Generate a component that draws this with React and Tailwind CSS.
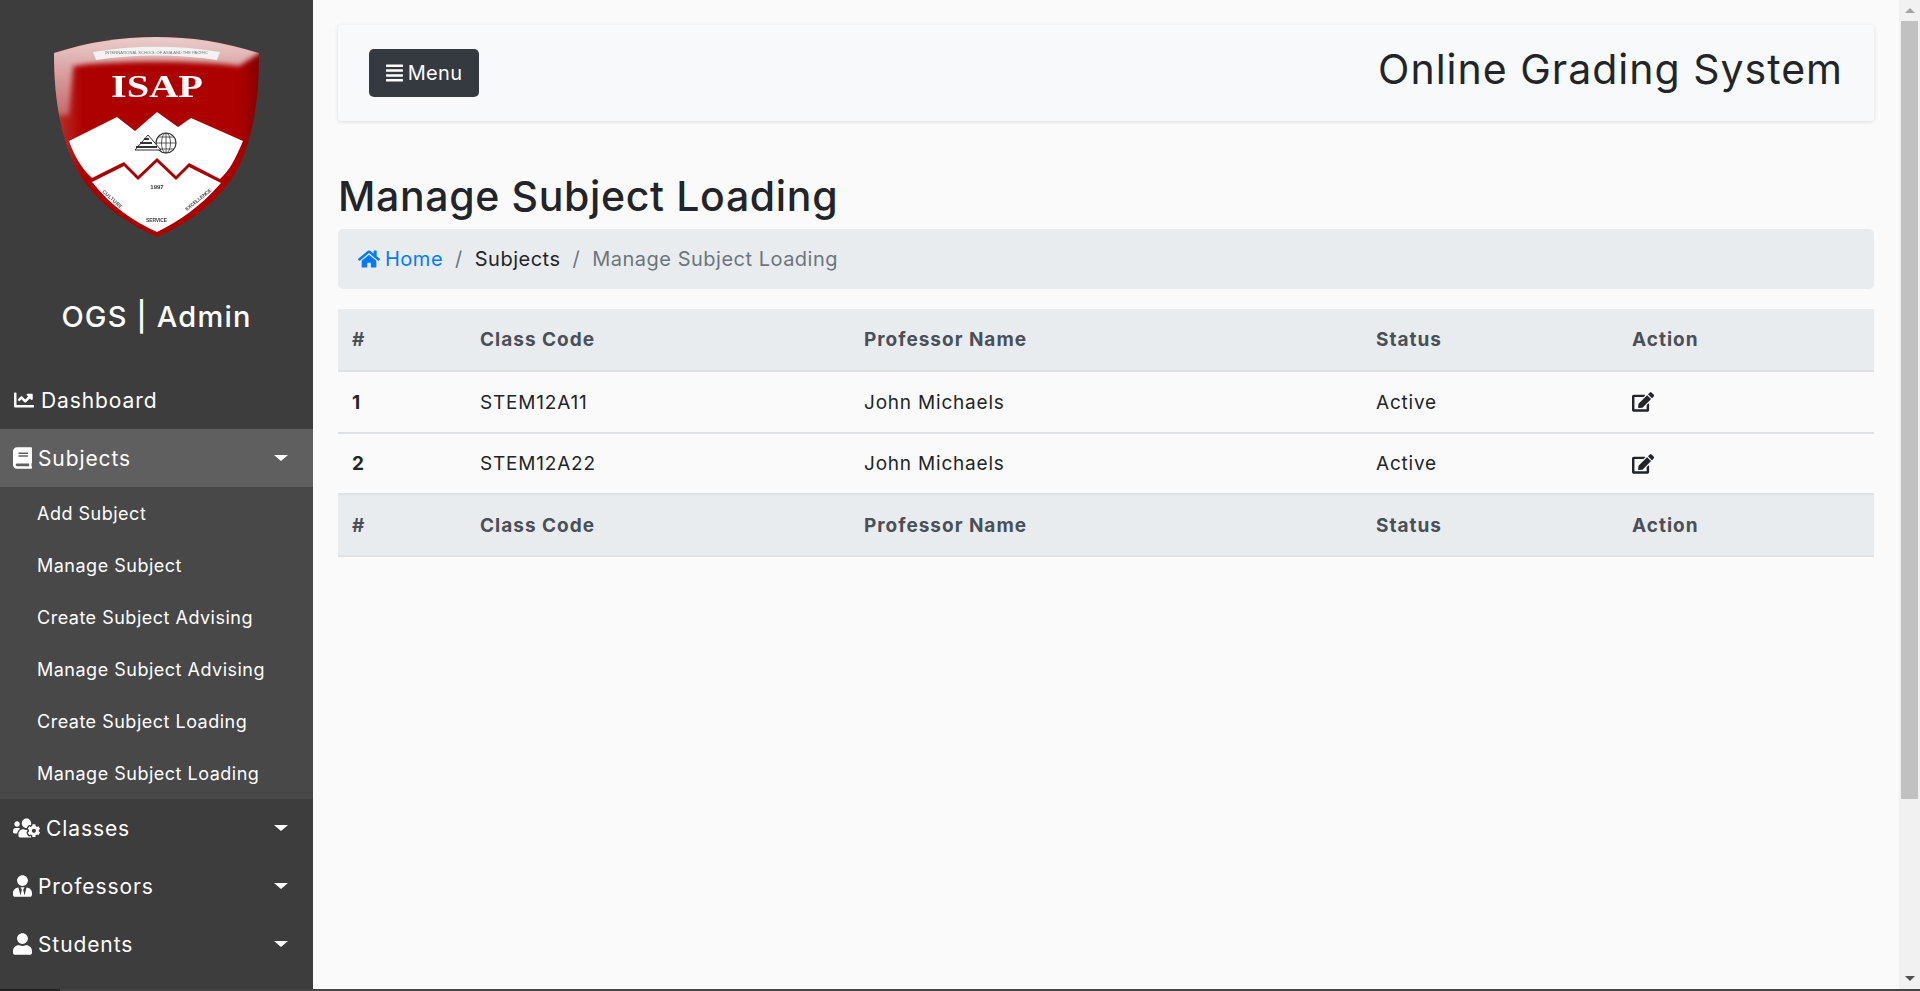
import { FaChartLine, FaBook, FaUsersCog, FaUserTie, FaUser, FaAlignJustify, FaHome, FaEdit } from 'react-icons/fa'

const subItems = ['Add Subject', 'Manage Subject', 'Create Subject Advising', 'Manage Subject Advising', 'Create Subject Loading', 'Manage Subject Loading']

const rows = [
  { id: 1, code: 'STEM12A11', prof: 'John Michaels', status: 'Active', height: 'h-[62px]' },
  { id: 2, code: 'STEM12A22', prof: 'John Michaels', status: 'Active', height: 'h-[61px]' },
]

function Caret() {
  return <span className="ml-auto mr-[25px] w-0 h-0 border-x-[7px] border-x-transparent border-t-[6px] border-t-white" />
}

function NavRow({ icon: Icon, label, caret, active, iconClass, labelClass }) {
  return (
    <div className={`flex items-center h-[58px] pl-[13px] text-white text-[21px] tracking-[0.9px] ${active ? 'bg-[#5f5f5f]' : ''}`}>
      <Icon className={iconClass} />
      <span className={`pt-[1px] ${labelClass}`}>{label}</span>
      {caret && <Caret />}
    </div>
  )
}

const SHIELD = 'M5 23 C40 12 70 7 107 7 C144 7 174 12 210 23 C210 70 204 110 187 142 C169 172 141 192 108 207 C75 192 47 172 29 142 C12 110 5 70 5 23 Z'

function Logo() {
  return (
    <svg viewBox="0 0 215 215" className="w-[215px] h-[215px] blur-[0.4px]">
      <defs>
        <linearGradient id="gloss" x1="0" y1="0" x2="0" y2="1">
          <stop offset="0" stopColor="#ecd2d2" />
          <stop offset="1" stopColor="#c46a6a" />
        </linearGradient>
        <linearGradient id="side" x1="0" y1="0" x2="1" y2="0">
          <stop offset="0" stopColor="#bb3a32" />
          <stop offset="0.14" stopColor="#ad0000" />
          <stop offset="0.9" stopColor="#ad0000" />
          <stop offset="1" stopColor="#850000" />
        </linearGradient>
        <clipPath id="shield-clip"><path d={SHIELD} /></clipPath>
        <filter id="soft"><feGaussianBlur stdDeviation="2.5" /></filter>
      </defs>
      {/* shield */}
      <path d={SHIELD} fill="url(#side)" />
      <g clipPath="url(#shield-clip)">
        <path d="M0 20 C40 8 70 3 107 3 C144 3 174 8 215 20 L190 36 C150 30 64 30 24 36 L20 85 L0 85 Z" fill="url(#gloss)" filter="url(#soft)" />
      </g>
      {/* ribbon */}
      <path d="M44 22 C85 15 130 15 171 22 L168 30 C130 24 85 24 47 30 Z" fill="#f2f2f2" />
      <text x="56" y="24" fontSize="4" textLength="103" lengthAdjust="spacingAndGlyphs" fill="#777" fontFamily="Liberation Sans, sans-serif">INTERNATIONAL SCHOOL OF ASIA AND THE PACIFIC</text>
      <text x="62" y="67" fontSize="32" textLength="92" lengthAdjust="spacingAndGlyphs" fontWeight="700" fill="#fff" fontFamily="Liberation Serif, serif">ISAP</text>
      {/* white mountains */}
      <path d="M20 111 L68 87 L86 101 L108 82 L129 97 L142 88 L194 111 C186 130 180 141 171 149 L140 133 L127 146 L108 128 L89 146 L75 132 L43 148 C32 138 25 125 20 111 Z" fill="#fff" />
      <path d="M43 152 L75 136 L89 150 L108 132 L127 150 L140 137 L172 153 C150 178 130 191 108 202 C84 191 62 176 43 152 Z" fill="#fff" />
      {/* pyramid and globe */}
      <circle cx="117" cy="113" r="10" fill="#fff" stroke="#333" strokeWidth="1.2" />
      <path d="M107 113 H127 M117 103 V123 M109 107 H125 M109 119 H125" stroke="#333" strokeWidth="0.8" fill="none" />
      <ellipse cx="117" cy="113" rx="4.5" ry="10" fill="none" stroke="#333" strokeWidth="0.8" />
      <path d="M86 120 L99 105 L112 120 Z" fill="#fff" stroke="#333" strokeWidth="1" />
      <path d="M95 109 H100 M91 113 H103 M87 117 H108" stroke="#333" strokeWidth="1.8" />
      <text x="108" y="159" textAnchor="middle" fontSize="6" fontWeight="700" fill="#333" fontFamily="Liberation Sans, sans-serif">1997</text>
      <text fontSize="5" textLength="25" fontWeight="700" fill="#444" fontFamily="Liberation Sans, sans-serif" transform="translate(53 162) rotate(42)">CULTURE</text>
      <text x="97" y="192" fontSize="5" textLength="21" fontWeight="700" fill="#444" fontFamily="Liberation Sans, sans-serif">SERVICE</text>
      <text fontSize="5" textLength="32" fontWeight="700" fill="#444" fontFamily="Liberation Sans, sans-serif" transform="translate(138 181) rotate(-39)">EXCELLENCE</text>
    </svg>
  )
}

function HeadRow({ height }) {
  const th = 'text-left font-bold text-[#495057] text-[19px] tracking-[1px] px-[14px] pt-[2px] bg-[#e9ecef] border-b-2 border-[#dee2e6]'
  return (
    <tr className={height}>
      <th className={`${th} w-[128px]`}>#</th>
      <th className={`${th} w-[384px]`}>Class Code</th>
      <th className={`${th} w-[512px]`}>Professor Name</th>
      <th className={`${th} w-[256px]`}>Status</th>
      <th className={th}>Action</th>
    </tr>
  )
}

export default function App() {
  return (
    <div className="h-screen flex flex-col overflow-hidden bg-[#fafafa] font-['Inter','Liberation_Sans',sans-serif]">
      <div className="flex flex-1 min-h-0">
        {/* Sidebar */}
        <aside className="w-[313px] shrink-0 bg-[#3d3d3d] flex flex-col">
          <div className="h-[371px] flex flex-col items-center">
            <div className="mt-[30px]"><Logo /></div>
            <h3 className="mt-[54px] text-[29px] leading-[36px] font-medium text-white tracking-[1.2px]">OGS | Admin</h3>
          </div>
          <NavRow icon={FaChartLine} label="Dashboard" iconClass="w-[22px] h-[20px]" labelClass="ml-[6px]" />
          <NavRow icon={FaBook} label="Subjects" caret active iconClass="w-[19px] h-[22px]" labelClass="ml-[6px]" />
          <div className="bg-[#484848]">
            {subItems.map((s) => (
              <div key={s} className="h-[52px] flex items-center pl-[37px] text-white text-[18px] tracking-[0.5px]">{s}</div>
            ))}
          </div>
          <NavRow icon={FaUsersCog} label="Classes" caret iconClass="w-[27px] h-[22px]" labelClass="ml-[6px]" />
          <NavRow icon={FaUserTie} label="Professors" caret iconClass="w-[19px] h-[22px]" labelClass="ml-[6px]" />
          <NavRow icon={FaUser} label="Students" caret iconClass="w-[19px] h-[22px]" labelClass="ml-[6px]" />
        </aside>

        {/* Content */}
        <main className="flex-1 min-w-0 px-[25px] pt-[25px]">
          <nav className="h-[96px] bg-[#f8f9fa] rounded-[3px] shadow-[0_1px_4px_rgba(0,0,0,0.12)] flex items-center justify-between px-[31px]">
            <button className="h-[48px] w-[110px] bg-[#343a40] rounded-[5px] text-white text-[20px] tracking-[0.3px] flex items-center justify-center gap-[5px]">
              <FaAlignJustify className="w-[17px] h-[20px]" />
              Menu
            </button>
            <h1 className="text-[41px] leading-[48px] -mt-[9px] text-[#212529] font-normal tracking-[1px]">Online Grading System</h1>
          </nav>

          <h2 className="mt-[51px] text-[41px] leading-[48px] font-medium text-[#212529] tracking-[0.65px]">Manage Subject Loading</h2>

          <div className="mt-[9px] h-[60px] bg-[#e9ecef] rounded-[5px] flex items-center pl-[20px] text-[20px] tracking-[0.5px]">
            <FaHome className="text-[#007bff] w-[22px] h-[20px] mr-[5px]" />
            <span className="text-[#007bff]">Home</span>
            <span className="text-[#6c757d] px-[12px]">/</span>
            <span className="text-[#212529]">Subjects</span>
            <span className="text-[#6c757d] px-[12px]">/</span>
            <span className="text-[#6c757d]">Manage Subject Loading</span>
          </div>

          <table className="mt-[20px] w-full table-fixed border-collapse">
            <thead><HeadRow height="h-[62px]" /></thead>
            <tbody>
              {rows.map((r) => (
                <tr key={r.id} className={`${r.height} text-[19px] tracking-[0.8px] text-[#212529] border-b-2 border-[#dee2e6]`}>
                  <td className="px-[14px] pt-[2px] font-bold">{r.id}</td>
                  <td className="px-[14px] pt-[2px]">{r.code}</td>
                  <td className="px-[14px] pt-[2px]">{r.prof}</td>
                  <td className="px-[14px] pt-[2px]">{r.status}</td>
                  <td className="px-[14px]"><FaEdit className="w-[22px] h-[20px]" /></td>
                </tr>
              ))}
            </tbody>
            <tfoot><HeadRow height="h-[62px]" /></tfoot>
          </table>
        </main>

        {/* Scrollbar */}
        <div className="w-[21px] shrink-0 bg-[#f1f1f1] flex flex-col items-center">
          <div className="h-[21px] flex items-center">
            <span className="w-0 h-0 border-x-[5px] border-x-transparent border-b-[5px] border-b-[#a3a3a3]" />
          </div>
          <div className="w-[17px] h-[778px] bg-[#c1c1c1]" />
          <div className="mt-auto h-[21px] flex items-center">
            <span className="w-0 h-0 border-x-[5px] border-x-transparent border-t-[5px] border-t-[#505050]" />
          </div>
        </div>
      </div>
      {/* window edge */}
      <div className="h-[2px] shrink-0 flex">
        <div className="w-[60px] bg-[#222222]" />
        <div className="flex-1 bg-[#444444]" />
      </div>
    </div>
  )
}
